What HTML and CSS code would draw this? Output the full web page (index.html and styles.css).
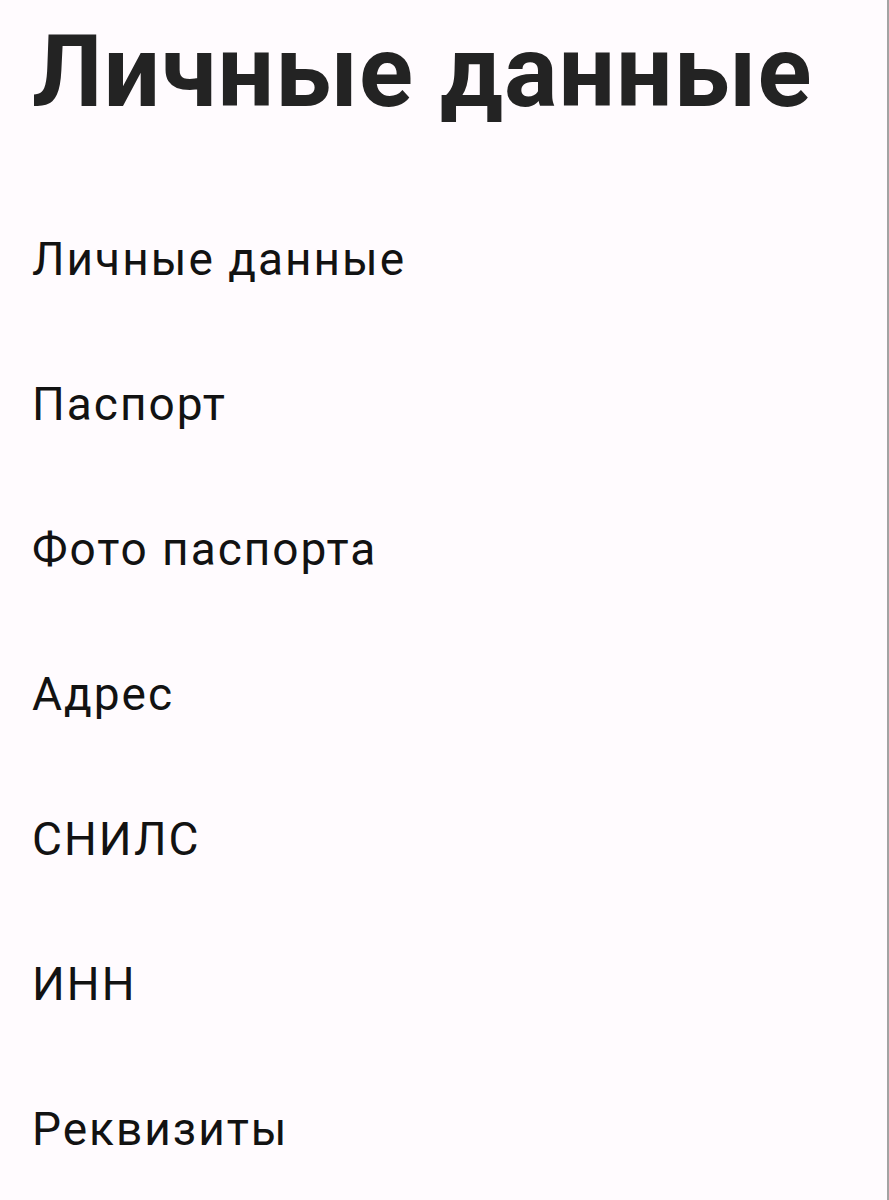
FILE: index.html
```html
<!DOCTYPE html>
<html lang="ru">
<head>
<meta charset="utf-8">
<title>Личные данные</title>
<link rel="stylesheet" href="styles.css">
</head>
<body>
<div class="screen">
  <h1 class="title">Личные данные</h1>
  <ul class="menu">
    <li class="menu-item">Личные данные</li>
    <li class="menu-item">Паспорт</li>
    <li class="menu-item">Фото паспорта</li>
    <li class="menu-item">Адрес</li>
    <li class="menu-item">СНИЛС</li>
    <li class="menu-item">ИНН</li>
    <li class="menu-item">Реквизиты</li>
  </ul>
</div>
</body>
</html>
```
FILE: styles.css
```css
html, body {
  margin: 0;
  padding: 0;
  background: #fffbfe;
}
body {
  font-family: Roboto, "Noto Sans", sans-serif;
}
.screen {
  height: 1200px;
  box-sizing: border-box;
  padding: 22px 0 0 32px;
  border-right: 2px solid #a3a3a3;
  overflow: hidden;
}
.title {
  margin: 0;
  font-size: 100px;
  line-height: 100px;
  font-weight: 700;
  letter-spacing: 1px;
  color: #232323;
}
.menu {
  list-style: none;
  margin: 65px 0 0 0;
  padding: 0;
}
.menu-item {
  font-size: 46px;
  line-height: 145px;
  letter-spacing: 2px;
  color: #121212;
}
```
